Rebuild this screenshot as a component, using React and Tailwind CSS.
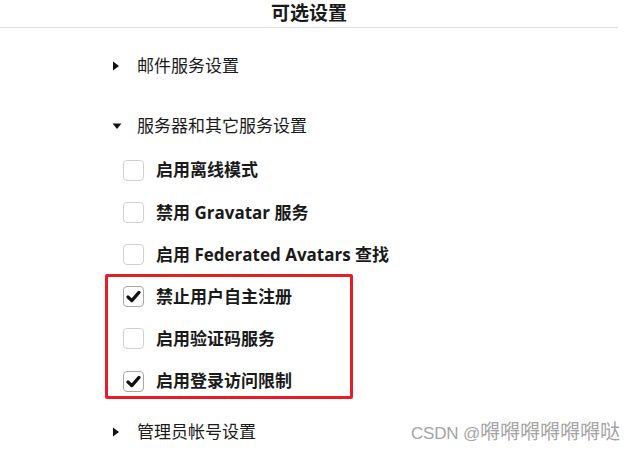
import React from "react";

const font = { fontFamily: '"Segoe UI", "Open Sans", "Noto Sans CJK SC", sans-serif' };

function TriRight() {
  return (
    <svg width="8" height="12" viewBox="0 0 8 12" className="shrink-0">
      <path d="M1 1.5 L7 6 L1 10.5 Z" fill="#111" />
    </svg>
  );
}
function TriDown() {
  return (
    <svg width="10" height="8" viewBox="0 0 10 8" className="shrink-0">
      <path d="M0.5 1.5 L9.5 1.5 L5 7 Z" fill="#111" />
    </svg>
  );
}

function Box({ checked }) {
  return (
    <div
      className={
        "w-[21px] h-[21px] rounded-[4px] border bg-white flex items-center justify-center shrink-0 " +
        (checked ? "border-[#a8a8a8]" : "border-[#d0d0d0]")
      }
    >
      {checked && (
        <svg width="15" height="13" viewBox="0 0 15 13">
          <path d="M2 7 L5.8 10.6 L13 2.4" fill="none" stroke="#111" strokeWidth="3.2" strokeLinecap="round" strokeLinejoin="round" />
        </svg>
      )}
    </div>
  );
}

function Section({ open, label }) {
  return (
    <div className="flex items-center h-[30px] pl-[112px]">
      <div className="w-[25px] flex items-center">{open ? <TriDown /> : <TriRight />}</div>
      <span className="text-[17px] text-[#1a1a1a]">{label}</span>
    </div>
  );
}

function Row({ checked, label }) {
  return (
    <div className="flex items-center h-[42.2px] pl-[123px]">
      <Box checked={checked} />
      <span className="ml-[12px] text-[17px] font-bold text-[#1a1a1a]">{label}</span>
    </div>
  );
}

export default function App() {
  return (
    <div className="w-[636px] h-[452px] bg-white overflow-hidden relative" style={font}>
      <div className="h-[28px] border-b border-[#dedede] flex justify-center w-[618px]">
        <span className="text-[19px] font-bold text-[#1a1a1a] leading-[26px]">可选设置</span>
      </div>
      <div className="mt-[23px]">
        <Section label="邮件服务设置" />
      </div>
      <div className="mt-[30px]">
        <Section open label="服务器和其它服务设置" />
      </div>
      <div className="mt-[8px]">
        <Row label="启用离线模式" />
        <Row label="禁用 Gravatar 服务" />
        <Row label="启用 Federated Avatars 查找" />
        <div className="relative">
          <Row checked label="禁止用户自主注册" />
          <Row label="启用验证码服务" />
          <Row checked label="启用登录访问限制" />
          <div className="absolute left-[105px] top-[-2px] w-[248px] h-[125px] border-[3px] border-[#e81c24] rounded-[2px] pointer-events-none" />
        </div>
      </div>
      <div className="mt-[15px] flex items-center justify-between pr-[16px]">
        <Section label="管理员帐号设置" />
        <span className="text-[#a4a4a4] flex items-baseline">
          <span className="text-[17px] tracking-[-0.2px]" style={{ fontFamily: '"Liberation Sans", Arial, sans-serif' }}>CSDN @</span>
          <span className="text-[20px]">嘚嘚嘚嘚嘚嘚哒</span>
        </span>
      </div>
    </div>
  );
}
